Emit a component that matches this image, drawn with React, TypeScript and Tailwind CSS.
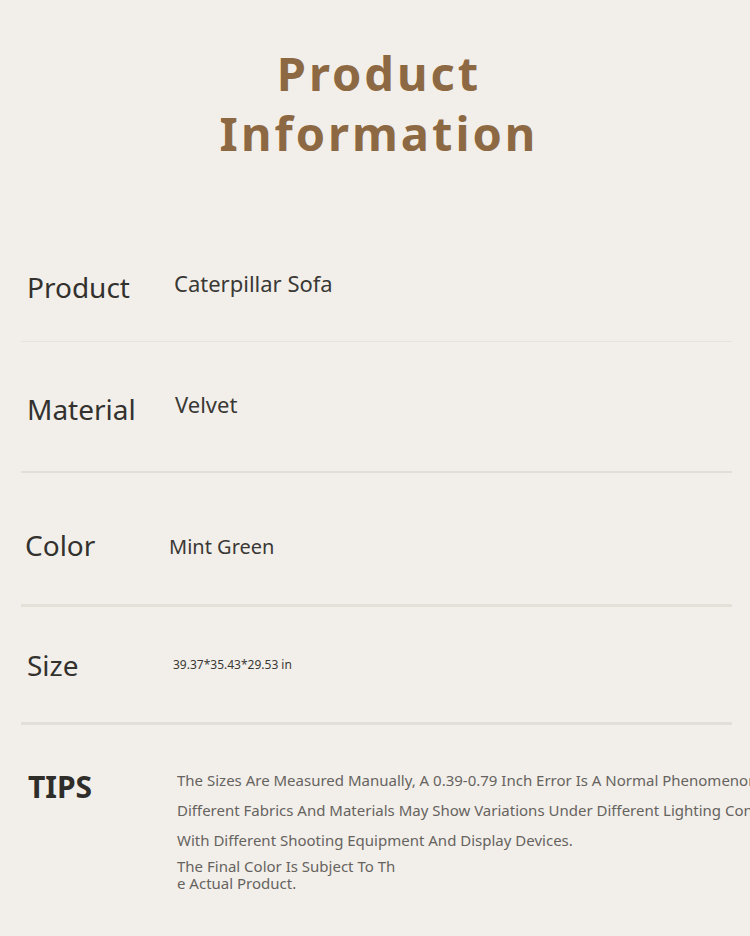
import React from "react";

type Row = {
  label: string;
  value: string;
  mt: string;
  labelPl: string;
  valuePl: string;
  valueCls: string;
  mb: string;
  divider: string;
};

const rows: Row[] = [
  {
    label: "Product",
    value: "Caterpillar Sofa",
    mt: "mt-[104px]",
    labelPl: "pl-[6px]",
    valuePl: "pl-[153px]",
    valueCls: "text-[22px] mt-[-8px]",
    mb: "mt-[34px]",
    divider: "h-px bg-[#e6e3dd]",
  },
  {
    label: "Material",
    value: "Velvet",
    mt: "mt-[47px]",
    labelPl: "pl-[6px]",
    valuePl: "pl-[154px]",
    valueCls: "text-[22px] mt-[-10px]",
    mb: "mt-[42px]",
    divider: "h-[2px] bg-[#e2dfd8]",
  },
  {
    label: "Color",
    value: "Mint Green",
    mt: "mt-[52px]",
    labelPl: "pl-[4px]",
    valuePl: "pl-[148px]",
    valueCls: "text-[20px] mt-[4px]",
    mb: "mt-[39px]",
    divider: "h-[3px] bg-[#e3e0d8]",
  },
  {
    label: "Size",
    value: "39.37*35.43*29.53 in",
    mt: "mt-[38px]",
    labelPl: "pl-[6px]",
    valuePl: "pl-[152px]",
    valueCls: "text-[12px]",
    mb: "mt-[37px]",
    divider: "h-[3px] bg-[#e2dfd8]",
  },
];

export default function App() {
  return (
    <div
      className="w-[750px] h-[936px] overflow-hidden bg-[#f2efea]"
      style={{ fontFamily: '"Noto Sans", "Open Sans", sans-serif' }}
    >
      <h1 className="pt-[43px] pl-[8px] text-center text-[47px] leading-[60px] font-bold tracking-[3px] text-[#8d6943]">
        Product
        <br />
        Information
      </h1>

      <div className="ml-[21px] w-[711px]">
        {rows.map((r) => (
          <div key={r.label}>
            <div className={`${r.mt} relative h-[40px] flex items-center`}>
              <div
                className={`${r.labelPl} text-[28px] leading-[40px] text-[#33312e] whitespace-nowrap`}
              >
                {r.label}
              </div>
              <div className={`absolute left-0 top-0 h-[40px] flex items-center ${r.valuePl}`}>
                <span className={`${r.valueCls} text-[#3a3835] whitespace-nowrap`}>{r.value}</span>
              </div>
            </div>
            <div className={`${r.mb} ${r.divider}`} />
          </div>
        ))}
      </div>

      <div className="mt-[47px] flex">
        <div className="w-[177px] shrink-0 pl-[28px] text-[30px] leading-[30px] font-bold text-[#2f2d2a]">
          TIPS
        </div>
        <div className="text-[15px] leading-[17px] text-[#66635f] whitespace-nowrap">
          <p>The Sizes Are Measured Manually, A 0.39-0.79 Inch Error Is A Normal Phenomenon.</p>
          <p className="mt-[13px]">
            Different Fabrics And Materials May Show Variations Under Different Lighting Conditions
          </p>
          <p className="mt-[13px]">With Different Shooting Equipment And Display Devices.</p>
          <p className="mt-[9px]">
            The Final Color Is Subject To Th
            <br />e Actual Product.
          </p>
        </div>
      </div>
    </div>
  );
}
